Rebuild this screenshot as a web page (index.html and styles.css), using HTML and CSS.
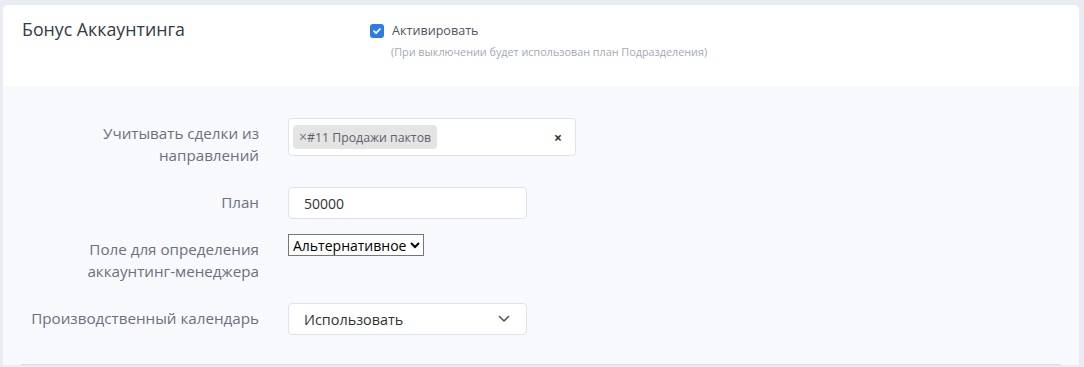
FILE: index.html
```html
<!DOCTYPE html>
<html lang="ru">
<head>
  <meta charset="UTF-8">
  <title>Бонус Аккаунтинга</title>
  <link rel="stylesheet" href="styles.css">
</head>
<body>
  <div class="card">
    <!-- шапка блока -->
    <div class="card-header">
      <div class="card-title">Бонус Аккаунтинга</div>
      <div class="activate">
        <label class="check-line">
          <span class="checkbox">
            <svg width="10" height="10" viewBox="0 0 10 10"><path d="M2 5.2 L4.1 7.2 L8 3" fill="none" stroke="#fff" stroke-width="1.8" stroke-linecap="round" stroke-linejoin="round"/></svg>
          </span>
          Активировать
        </label>
        <div class="hint">(При выключении будет использован план Подразделения)</div>
      </div>
    </div>

    <!-- настройки -->
    <div class="card-body">
      <div class="form-row">
        <div class="form-label">Учитывать сделки из<br>направлений</div>
        <div class="multi-select">
          <span class="tag"><span class="tag-x">×</span>#11 Продажи пактов</span>
          <span class="clear">×</span>
        </div>
      </div>

      <div class="form-row">
        <div class="form-label">План</div>
        <input class="text-input" type="text" value="50000">
      </div>

      <div class="form-row">
        <div class="form-label">Поле для определения<br>аккаунтинг-менеджера</div>
        <div>
          <select class="plain-select">
            <option>Альтернативное</option>
          </select>
        </div>
      </div>

      <div class="form-row">
        <div class="form-label">Производственный календарь</div>
        <div class="fake-select">
          <span>Использовать</span>
          <svg width="12" height="8" viewBox="0 0 12 8"><path d="M1.5 1.5 L6 6 L10.5 1.5" fill="none" stroke="#555" stroke-width="1.6" stroke-linecap="round" stroke-linejoin="round"/></svg>
        </div>
      </div>

      <div class="divider"></div>
    </div>
  </div>
</body>
</html>
```

FILE: styles.css
```css
body {
  margin: 0;
  background-color: #e9ecf3;
  font-family: "Open Sans", "Noto Sans", sans-serif;
  height: 367px;
  overflow: hidden;
}

.card {
  margin: 5px 5px 0 3px;
  border-radius: 5px 5px 0 0;
  overflow: hidden;
  background: #f8f9fd;
}

/* шапка */
.card-header {
  background: #fff;
  height: 81px;
  display: grid;
  grid-template-columns: 348px 1fr;
  padding-left: 19px;
  box-sizing: border-box;
}

.card-title {
  font-size: 17.8px;
  color: #343a46;
  padding-top: 12px;
  line-height: 24px;
}

.activate {
  padding-top: 17px;
}

.check-line {
  display: flex;
  align-items: center;
  gap: 8px;
  font-size: 12.6px;
  color: #4f5460;
  line-height: 18px;
}

.checkbox {
  width: 14px;
  height: 14px;
  border-radius: 3px;
  background: #2d7be5;
  display: flex;
  align-items: center;
  justify-content: center;
}

.hint {
  font-size: 10.8px;
  color: #a3a9b6;
  margin-top: 4px;
  padding-left: 21px;
}

/* форма */
.card-body {
  padding: 32px 18px 0 18px;
  display: flex;
  flex-direction: column;
  gap: 15px;
}

.form-row {
  display: grid;
  grid-template-columns: 238px 288px;
  column-gap: 29px;
  align-items: start;
}

.form-label {
  text-align: right;
  font-size: 15.2px;
  line-height: 22px;
  color: #6b707c;
  padding: 4px 0 6px;
}

.multi-select {
  width: 288px;
  height: 38px;
  box-sizing: border-box;
  background: #fff;
  border: 1px solid #dde2ec;
  border-radius: 4px;
  display: flex;
  align-items: center;
  justify-content: space-between;
  padding: 0 13px 0 4px;
}

.tag {
  background: #e4e4e4;
  border-radius: 4px;
  height: 24px;
  line-height: 24px;
  padding: 0 6px 0 6px;
  font-size: 12.3px;
  color: #5c616d;
}

.tag-x {
  color: #777c86;
  font-size: 14px;
}

.clear {
  font-weight: bold;
  font-size: 14px;
  color: #333;
}

.text-input {
  width: 239px;
  height: 32px;
  box-sizing: border-box;
  border: 1px solid #dde2ec;
  border-radius: 4px;
  padding: 0 15px;
  font-family: "Open Sans", sans-serif;
  font-size: 14px;
  color: #333;
  background: #fff;
}

.plain-select {
  font-family: "Open Sans", sans-serif;
  font-size: 14px;
  color: #000;
  height: 22px;
  border: 1px solid #767676;
  border-radius: 0;
  background: #fff;
  padding: 0;
}

.fake-select {
  width: 239px;
  height: 32px;
  box-sizing: border-box;
  border: 1px solid #dde2ec;
  border-radius: 4px;
  background: #fff;
  display: flex;
  align-items: center;
  justify-content: space-between;
  padding: 0 16px 0 15px;
  font-size: 14.4px;
  color: #333;
}

.divider {
  height: 1px;
  background: #d9dde6;
  margin: 14px 0 0 0;
  width: 1040px;
}
```
